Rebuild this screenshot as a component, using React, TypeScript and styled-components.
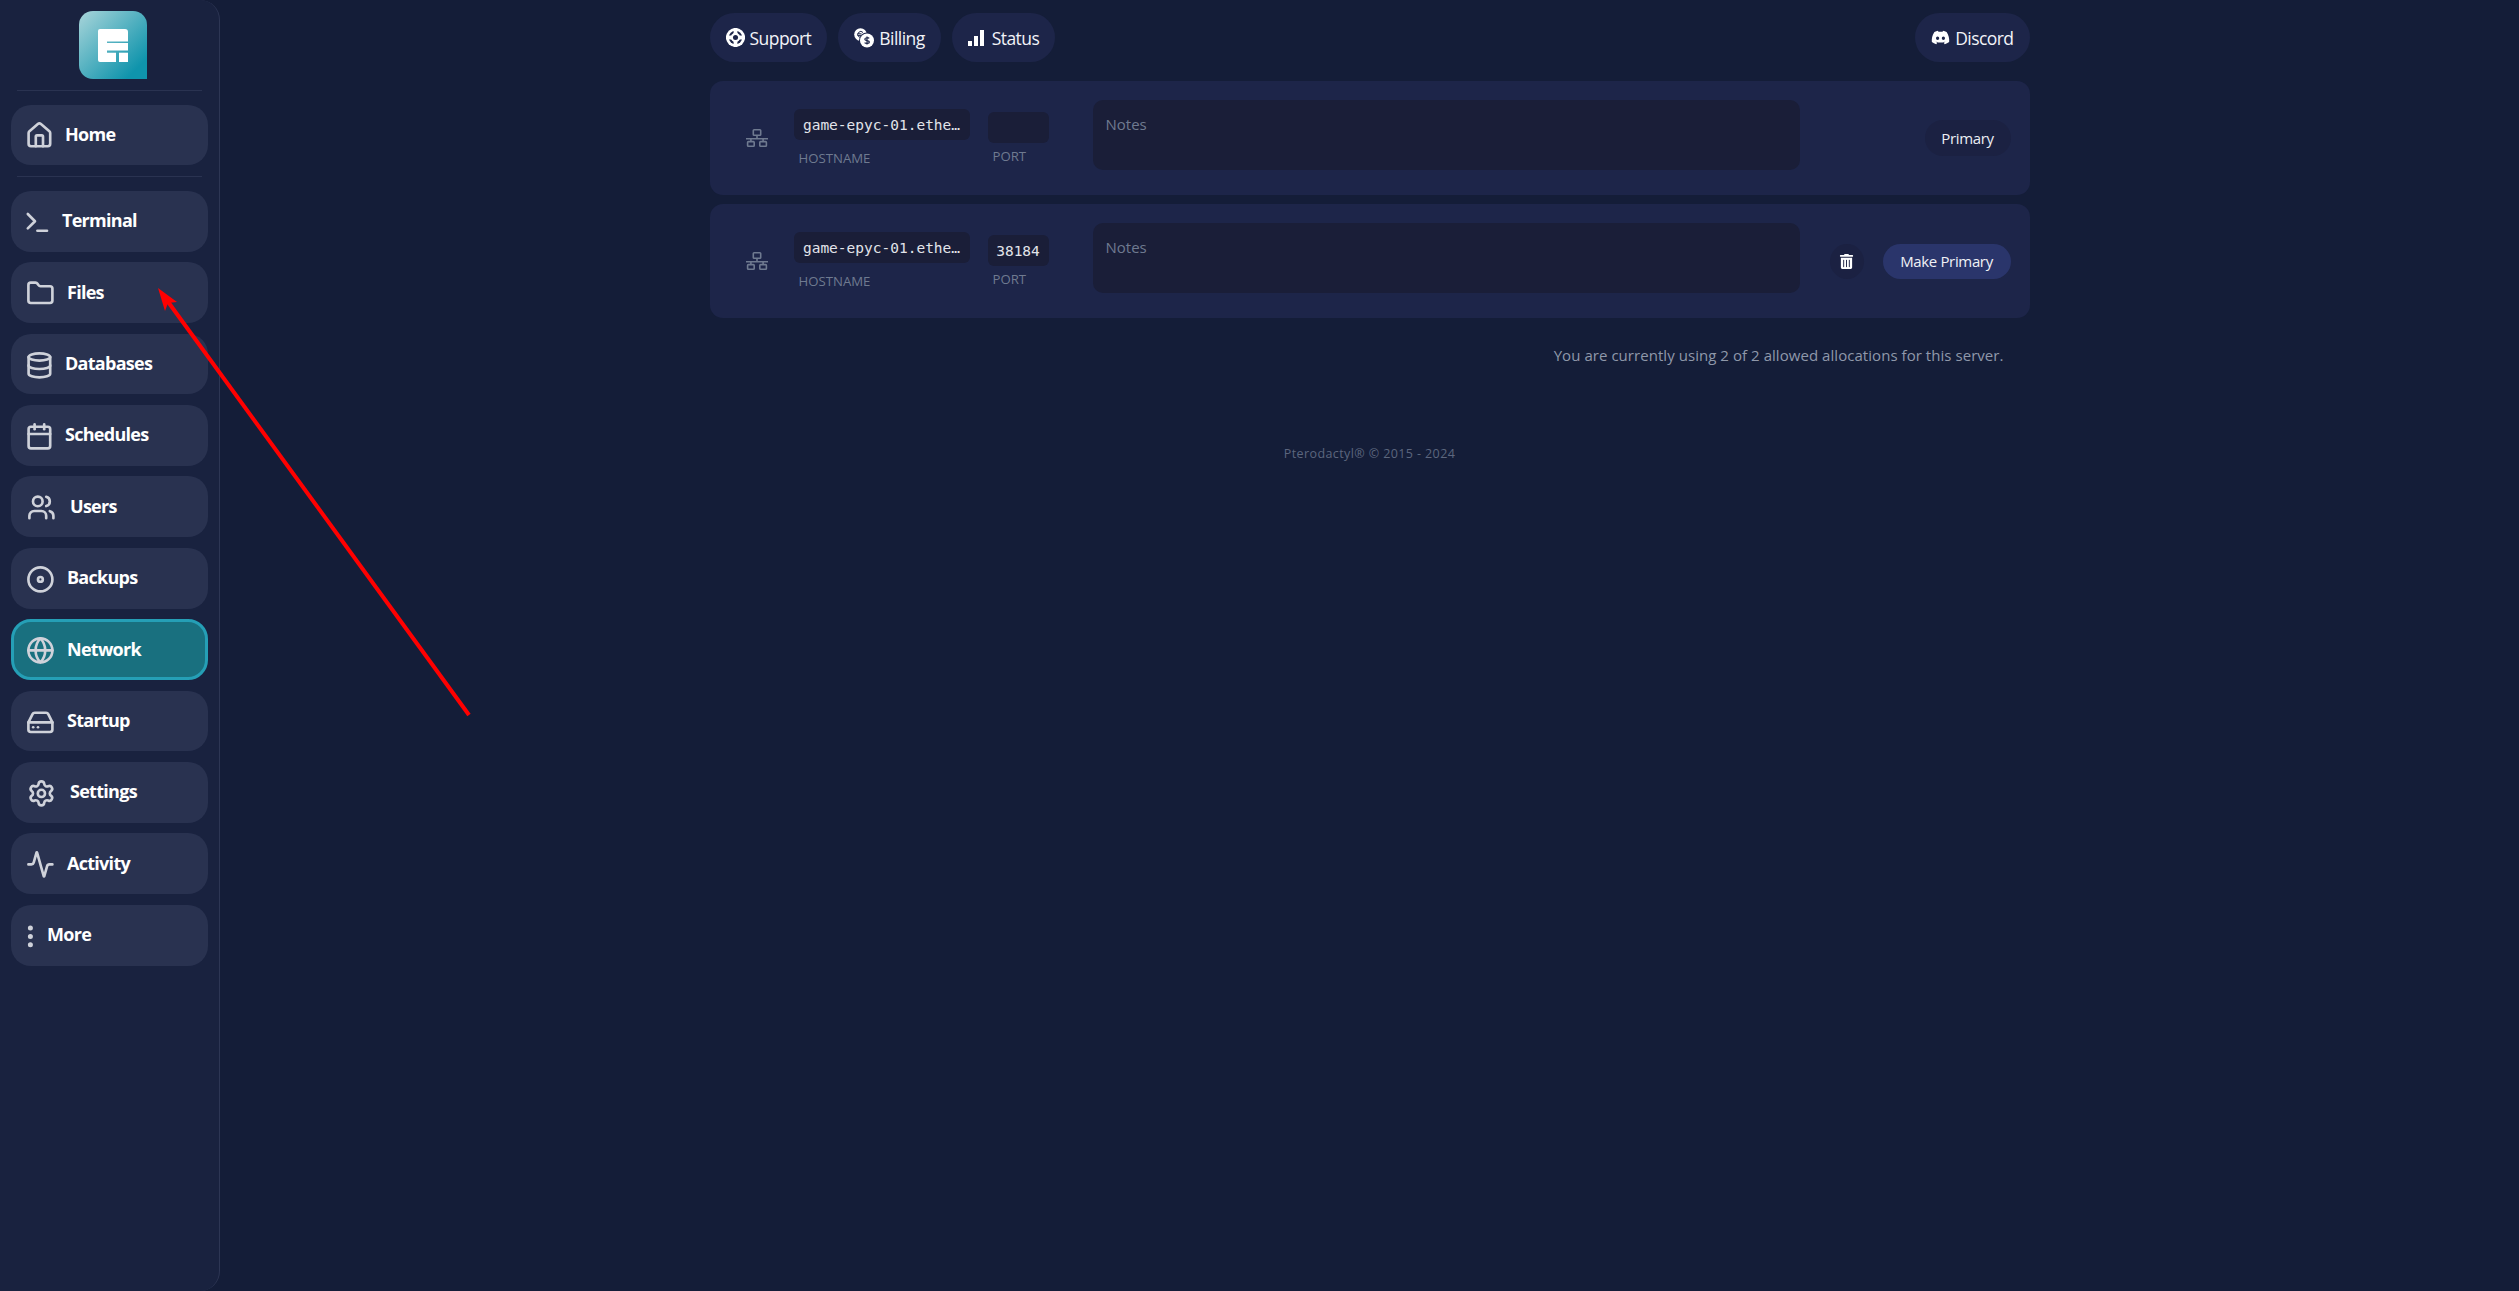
import React, { FC, ReactNode } from 'react'
import styled, { createGlobalStyle } from 'styled-components'
import {
  Activity,
  Calendar,
  Database,
  Disc,
  EllipsisVertical,
  Folder,
  Globe,
  HardDrive,
  House,
  LucideIcon,
  Settings,
  Terminal,
  Users,
} from 'lucide-react'
import { FaDiscord, FaTrashAlt } from 'react-icons/fa'

const UI_FONT = '"Open Sans", "Noto Sans", sans-serif'
const MONO_FONT = '"DejaVu Sans Mono", "Liberation Mono", monospace'

const GlobalStyle = createGlobalStyle`
  html, body {
    margin: 0;
    padding: 0;
    background: #141d38;
    font-family: ${UI_FONT};
  }
  * { box-sizing: border-box; }
`

type NavEntry = { label: string; icon: LucideIcon; width: number }

const NAV_ENTRIES: NavEntry[] = [
  { label: 'Terminal', icon: Terminal, width: 21 },
  { label: 'Files', icon: Folder, width: 26 },
  { label: 'Databases', icon: Database, width: 24 },
  { label: 'Schedules', icon: Calendar, width: 24 },
  { label: 'Users', icon: Users, width: 29 },
  { label: 'Backups', icon: Disc, width: 26 },
  { label: 'Network', icon: Globe, width: 26 },
  { label: 'Startup', icon: HardDrive, width: 26 },
  { label: 'Settings', icon: Settings, width: 29 },
  { label: 'Activity', icon: Activity, width: 26 },
  { label: 'More', icon: EllipsisVertical, width: 6 },
]

const Page = styled.div`
  position: relative;
  display: flex;
  min-height: 1291px;
  overflow: hidden;
`

const Sidebar = styled.aside`
  flex: 0 0 220px;
  height: 1291px;
  padding: 11px 11px 0;
  background: #19223f;
  border-right: 1px solid #2d3654;
  border-radius: 0 20px 20px 0;
  display: flex;
  flex-direction: column;
`

const LogoWrap = styled.div`
  display: flex;
  justify-content: center;
  height: 68px;
  padding-left: 7px;
`

const Divider = styled.div`
  height: 1px;
  margin: 11px 6px 13.5px;
  background: #2a3351;
`

const NavList = styled.nav`
  display: flex;
  flex-direction: column;
  gap: 10.6px;
`

const NavButton = styled.div<{ $active?: boolean }>`
  width: 197px;
  height: 60.8px;
  padding-left: 16px;
  display: flex;
  align-items: center;
  gap: 14px;
  border-radius: 20px;
  color: #fff;
  font-size: 18px;
  font-weight: 700;
  letter-spacing: -0.72px;
  background: ${({ $active }) => ($active ? '#19707f' : '#293250')};
  border: ${({ $active }) => ($active ? '3px solid #259fb6' : 'none')};
  ${({ $active }) => $active && 'padding-left: 13px;'}
`

const NavLabel = styled.span`
  margin-bottom: 2px;
`

const NavIconSlot = styled.span<{ $width: number }>`
  width: ${({ $width }) => $width}px;
  height: 29px;
  margin-top: 2px;
  flex: none;
  display: flex;
  align-items: center;
  justify-content: center;
  color: #cfd2da;

  svg {
    flex: none;
    width: 28.8px;
    height: 28.8px;
    stroke-width: 2.2;
  }
`

const Main = styled.main`
  flex: 1;
  display: flex;
  flex-direction: column;
  align-items: center;
  padding-top: 13px;
`

const Content = styled.div`
  width: 1320px;
`

const TopBar = styled.div`
  display: flex;
  gap: 11px;
  margin-bottom: 19px;
`

const PillLink = styled.div<{ $push?: boolean }>`
  height: 49px;
  padding: 0 16px;
  display: flex;
  align-items: center;
  gap: 5px;
  border-radius: 25px;
  background: #1d2549;
  color: #f2f3f8;
  font-size: 17.5px;
  letter-spacing: -0.55px;
  ${({ $push }) => $push && 'margin-left: auto;'}

  svg {
    flex: none;
    color: #fff;
  }
`

const Row = styled.section`
  height: 114px;
  margin-bottom: 9px;
  display: flex;
  align-items: center;
  border-radius: 13px;
  background: #1d2549;
`

const RowIcon = styled.span`
  margin-left: 36px;
  width: 22px;
  height: 22px;
  flex: none;
  color: #6f7a90;
  display: flex;
  align-items: center;
  justify-content: center;
`

const HostColumn = styled.div`
  align-self: flex-start;
  margin: 28px 0 0 26px;
  width: 176px;
`

const PortColumn = styled.div`
  align-self: flex-start;
  margin: 31px 0 0 18px;
  width: 61px;
`

const ValueBox = styled.div`
  height: 31px;
  padding: 0 9px;
  display: flex;
  align-items: center;
  justify-content: center;
  border-radius: 6px;
  background: #1a1e38;
  color: #e2e4ea;
  font-family: ${MONO_FONT};
  font-size: 14.5px;
  white-space: nowrap;
`

const FieldLabel = styled.div<{ $gap: number }>`
  margin: ${({ $gap }) => $gap}px 0 0 5px;
  color: #6f7a90;
  font-size: 13.2px;
  line-height: 17px;
`

const NotesField = styled.textarea`
  align-self: flex-start;
  margin: 19px 0 0 44px;
  width: 707px;
  height: 70px;
  padding: 14px 13px;
  border: none;
  border-radius: 10px;
  outline: none;
  resize: none;
  background: #1a1e38;
  color: #d8dbe3;
  font-family: ${UI_FONT};
  font-size: 15px;

  &::placeholder {
    color: #6f7a90;
    opacity: 1;
  }
`

const RowActions = styled.div`
  margin-left: auto;
  padding-right: 19px;
  display: flex;
  align-items: center;
  gap: 19px;
`

const PrimaryBadge = styled.span`
  width: 86px;
  height: 36px;
  display: flex;
  align-items: center;
  justify-content: center;
  border-radius: 18px;
  background: #1b2142;
  color: #eceef4;
  font-size: 15px;
  letter-spacing: -0.35px;
`

const TrashButton = styled.button`
  width: 34px;
  height: 35px;
  padding: 0;
  display: flex;
  align-items: center;
  justify-content: center;
  border: none;
  border-radius: 50%;
  background: #1b2142;
  color: #fff;
`

const MakePrimaryButton = styled.button`
  width: 128px;
  height: 35px;
  padding: 0;
  border: none;
  border-radius: 18px;
  background: #2a356b;
  color: #f0f1f6;
  font-family: ${UI_FONT};
  font-size: 15px;
  letter-spacing: -0.35px;
`

const AllocationNote = styled.p`
  margin: 27px 26px 0 0;
  text-align: right;
  color: #8f98aa;
  font-size: 15px;
  line-height: 20px;
  letter-spacing: 0.05px;
`

const Footer = styled.footer`
  margin-top: 80px;
  text-align: center;
  color: #5c667e;
  font-size: 12.5px;
  line-height: 17px;
  letter-spacing: 0.4px;
`

const ArrowOverlay = styled.svg`
  position: absolute;
  top: 0;
  left: 0;
  width: 600px;
  height: 800px;
  pointer-events: none;
`

const Logo: FC = () => (
  <svg width="68" height="68" viewBox="0 0 68 68">
    <defs>
      <linearGradient id="logoFill" x1="0" y1="0" x2="1" y2="1">
        <stop offset="0" stopColor="#a9d5da" />
        <stop offset="0.85" stopColor="#0f94ac" />
        <stop offset="1" stopColor="#0f94ac" />
      </linearGradient>
    </defs>
    <path
      d="M14 0H54a14 14 0 0 1 14 14V68H14A14 14 0 0 1 0 54V14A14 14 0 0 1 14 0Z"
      fill="url(#logoFill)"
    />
    <path
      d="M21 18h25a3 3 0 0 1 3 3v9.6H28V32h21v7.6H28v2.1h9V51H21a2 2 0 0 1-2-2V20a2 2 0 0 1 2-2Z"
      fill="#fff"
    />
    <rect x="40" y="41.7" width="9" height="9.3" fill="#fff" />
  </svg>
)

const SupportIcon: FC = () => (
  <svg width="19" height="19" viewBox="0 0 18 18">
    <circle cx="9" cy="9" r="9" fill="#fff" />
    <circle cx="9" cy="9" r="6.4" fill="#1d2549" />
    <path d="M9 0v18M0 9h18" stroke="#fff" strokeWidth="3.6" />
    <circle cx="9" cy="9" r="4.4" fill="#fff" />
    <circle cx="9" cy="9" r="2.4" fill="#1d2549" />
  </svg>
)

const CoinsIcon: FC = () => (
  <svg width="20" height="20" viewBox="0 0 20 20">
    <circle cx="6.5" cy="6.5" r="6.3" fill="#fff" />
    <path d="M9 4.5a3 3 0 1 0 0 4M3.5 5.8h4M3.5 7.4h4" fill="none" stroke="#1d2549" strokeWidth="1" />
    <circle cx="13" cy="12.5" r="8" fill="#1d2549" />
    <circle cx="13" cy="12.5" r="7" fill="#fff" />
    <path
      d="M15.2 10.4c-.8-1-4.4-1-4.4.8s4.6 1 4.6 2.8-3.8 1.7-4.8.6M13 8.4v8.2"
      fill="none"
      stroke="#1d2549"
      strokeWidth="1.2"
    />
  </svg>
)

const StatusIcon: FC = () => (
  <svg width="19" height="16" viewBox="0 0 18 16" preserveAspectRatio="xMinYMid meet" fill="#fff">
    <rect x="0" y="11" width="4" height="5" />
    <rect x="6" y="6" width="4" height="10" />
    <rect x="12" y="0" width="4" height="16" />
  </svg>
)

const NetworkIcon: FC = () => (
  <svg width="22" height="18" viewBox="0 0 22 18" fill="none" stroke="currentColor" strokeWidth="1.6">
    <rect x="7.3" y="0.8" width="7.4" height="5.4" rx="0.8" />
    <path d="M11 6.2v3.6M0 9.8h22" />
    <rect x="1.6" y="12.6" width="6.6" height="4.6" rx="0.8" />
    <rect x="13.8" y="12.6" width="6.6" height="4.6" rx="0.8" />
    <path d="M4.9 9.8v2.8M17.1 9.8v2.8" />
  </svg>
)

type AllocationProps = { port?: string; actions: ReactNode }

const AllocationRow: FC<AllocationProps> = ({ port, actions }) => (
  <Row>
    <RowIcon>
      <NetworkIcon />
    </RowIcon>
    <HostColumn>
      <ValueBox>game-epyc-01.ethe…</ValueBox>
      <FieldLabel $gap={10}>HOSTNAME</FieldLabel>
    </HostColumn>
    <PortColumn>
      <ValueBox>{port}</ValueBox>
      <FieldLabel $gap={5}>PORT</FieldLabel>
    </PortColumn>
    <NotesField placeholder="Notes" />
    <RowActions>{actions}</RowActions>
  </Row>
)

const renderNavButton = ({ label, icon: Icon, width }: NavEntry) => (
  <NavButton key={label} $active={label === 'Network'}>
    <NavIconSlot $width={width}>
      <Icon />
    </NavIconSlot>
    <NavLabel>{label}</NavLabel>
  </NavButton>
)

export default function App() {
  return (
    <Page>
      <GlobalStyle />
      <Sidebar>
        <LogoWrap>
          <Logo />
        </LogoWrap>
        <Divider />
        <NavButton>
          <NavIconSlot $width={24}>
            <House />
          </NavIconSlot>
          <NavLabel>Home</NavLabel>
        </NavButton>
        <Divider />
        <NavList>{NAV_ENTRIES.map(renderNavButton)}</NavList>
      </Sidebar>

      <Main>
        <Content>
          <TopBar>
            <PillLink>
              <SupportIcon />
              Support
            </PillLink>
            <PillLink>
              <CoinsIcon />
              Billing
            </PillLink>
            <PillLink>
              <StatusIcon />
              Status
            </PillLink>
            <PillLink $push>
              <FaDiscord size={19} />
              Discord
            </PillLink>
          </TopBar>

          <AllocationRow actions={<PrimaryBadge>Primary</PrimaryBadge>} />
          <AllocationRow
            port="38184"
            actions={
              <>
                <TrashButton aria-label="Delete">
                  <FaTrashAlt size={15} />
                </TrashButton>
                <MakePrimaryButton>Make Primary</MakePrimaryButton>
              </>
            }
          />

          <AllocationNote>You are currently using 2 of 2 allowed allocations for this server.</AllocationNote>
          <Footer>Pterodactyl® © 2015 - 2024</Footer>
        </Content>
      </Main>

      <ArrowOverlay viewBox="0 0 600 800">
        <line x1="469" y1="715" x2="166" y2="299" stroke="#ff0000" strokeWidth="4" />
        <polygon points="158,288 165,311 168,303 177,302" fill="#ff0000" />
      </ArrowOverlay>
    </Page>
  )
}
